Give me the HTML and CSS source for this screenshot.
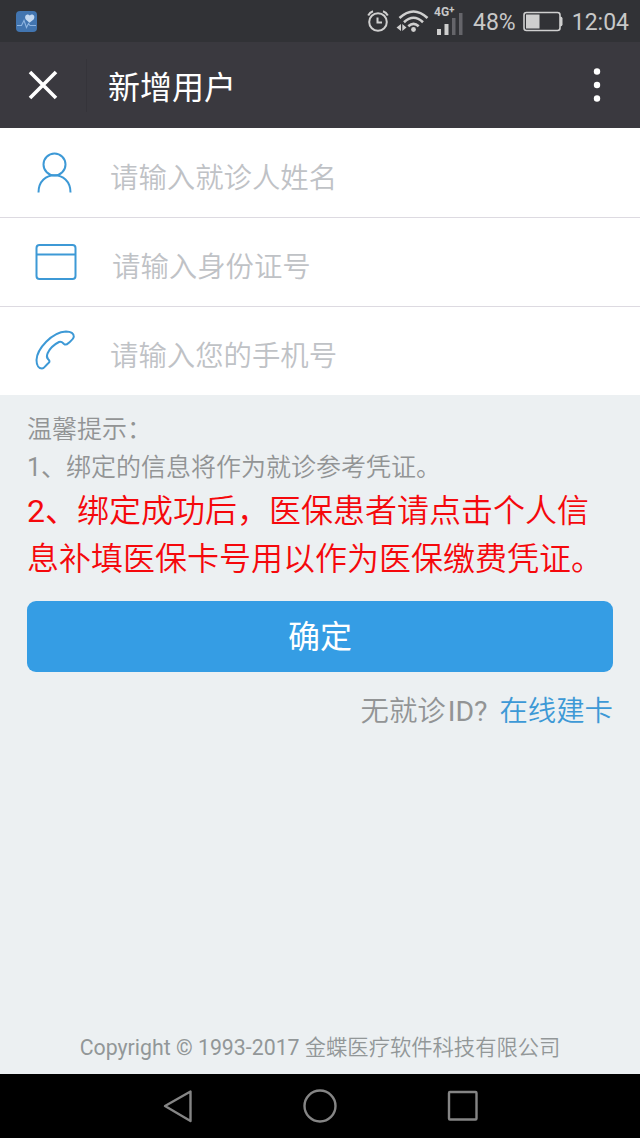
FILE: index.html
```
<!DOCTYPE html>
<html lang="zh-CN">
<head>
<meta charset="UTF-8">
<meta name="viewport" content="width=device-width, initial-scale=1.0">
<title>新增用户</title>
<link rel="stylesheet" href="styles.css">
</head>
<body>

<!-- Status bar -->
<div class="status-bar">
  <svg class="app-icon" width="21" height="21" viewBox="0 0 21 21">
    <rect width="21" height="21" rx="4" fill="#4275b0"/>
    <path d="M13.5 11.8L9.8 8.4C7.6 5 11.2 2 13.8 4.4C16.4 2 20 5 17.6 8.4Z" fill="#c3d8f0"/>
    <path d="M1 14.5H5.5L8 9.5L10.5 16.5L12.5 12.5L14 14.5H20" fill="none" stroke="#8db4e0" stroke-width="1.1"/>
  </svg>
  <div class="status-right">
    <svg width="22" height="24" viewBox="0 0 22 24" fill="none" stroke="#cfcfcf" stroke-width="2">
      <circle cx="11" cy="13" r="8.8"/>
      <path d="M10.5 8.5V13.5H15"/>
      <path d="M1.2 6.5Q2.8 3.2 6 2.2M20.8 6.5Q19.2 3.2 16 2.2"/>
    </svg>
    <svg class="wifi" width="33" height="24" viewBox="0 0 33 24" fill="none" stroke="#cfcfcf" stroke-width="2.6">
      <path d="M3.5 9Q17.5 -4 31.5 9"/>
      <path d="M8 13.2Q17.5 4.3 27 13.2"/>
      <path d="M12.3 17.2Q17.5 12.5 22.7 17.2"/>
      <circle cx="17.5" cy="20.5" r="2.4" fill="#cfcfcf" stroke="none"/>
      <path d="M0.5 18.5L5 15V22ZM10.5 18.5L6.3 15V22Z" fill="#cfcfcf" stroke="none"/>
    </svg>
    <div class="signal">
      <span class="network">4G<sup>+</sup></span>
      <svg width="27" height="22" viewBox="0 0 27 22">
        <path d="M1 16h4v6h-4zM8.5 11h4v11h-4z" fill="#cfcfcf"/>
        <path d="M16 5h3.5v17h-3.5zM23 0h3.5v22h-3.5z" fill="#65656a"/>
      </svg>
    </div>
    <span class="percent">48%</span>
    <svg class="battery" width="40" height="21" viewBox="0 0 40 21">
      <rect x="1" y="1.5" width="36" height="18" rx="2.5" fill="none" stroke="#cfcfcf" stroke-width="1.6"/>
      <rect x="3" y="3.5" width="13.5" height="14" fill="#cfcfcf"/>
      <path d="M37 5.5q2.5 0 2.5 2v6q0 2-2.5 2z" fill="#cfcfcf"/>
    </svg>
    <span class="time">12:04</span>
  </div>
</div>

<!-- Title bar -->
<header>
  <svg class="close" width="30" height="30" viewBox="0 0 30 30" stroke="#fff" stroke-width="3.6">
    <path d="M2 2L28 28M28 2L2 28"/>
  </svg>
  <h1>新增用户</h1>
  <svg class="more" width="8" height="34" viewBox="0 0 8 34" fill="#fff">
    <circle cx="4" cy="3.5" r="3.2"/>
    <circle cx="4" cy="17" r="3.2"/>
    <circle cx="4" cy="30.5" r="3.2"/>
  </svg>
</header>

<main>
  <form>
    <div class="fields">
      <label class="field">
        <svg width="42" height="42" viewBox="0 0 42 42">
          <circle cx="19.5" cy="12.5" r="11"/>
          <path d="M3.5 40.5C3.5 17.5 35.5 17.5 35.5 40.5"/>
        </svg>
        <input type="text" placeholder="请输入就诊人姓名">
      </label>
      <label class="field id-field">
        <svg width="42" height="42" viewBox="0 0 42 42">
          <rect x="1.5" y="4" width="39" height="34" rx="3"/>
          <path d="M1.5 13.5H40.5"/>
        </svg>
        <input type="text" placeholder="请输入身份证号">
      </label>
      <label class="field">
        <svg width="42" height="42" viewBox="0 0 42 42">
          <path d="M31 1.5C17 2 2 19 1.5 30C1.5 35.5 4 38.5 7 38.5C9.5 38.5 10.5 35.5 13 33.5C15.5 31.5 14.5 30.5 13 29C11.5 27.5 11.5 26 12.5 23.5C14.5 19 19 14.5 24 12C26.5 11 27.5 12.5 29 14C30.5 15.2 32 14.5 33.5 13C35.5 11 38.5 9.5 38.8 6.8C39 3.5 36 1.5 31 1.5Z"/>
        </svg>
        <input type="tel" placeholder="请输入您的手机号">
      </label>
    </div>

    <div class="tips">
      <p>温馨提示：</p>
      <p>1、绑定的信息将作为就诊参考凭证。</p>
      <p class="important">2、绑定成功后，医保患者请点击个人信息补填医保卡号用以作为医保缴费凭证。</p>
    </div>

    <button type="submit">确定</button>
  </form>

  <p class="no-card">无就诊<span class="latin">ID?</span> <a href="#">在线建卡</a></p>
</main>

<footer>
  <p><span class="latin">Copyright © 1993-2017</span> 金蝶医疗软件科技有限公司</p>
</footer>

<!-- System navigation -->
<nav>
  <svg width="32" height="34" viewBox="0 0 32 34"><path d="M4 17L29.5 2.5V32Z"/></svg>
  <svg width="34" height="34" viewBox="0 0 34 34"><circle cx="17" cy="17" r="15.5"/></svg>
  <svg width="32" height="34" viewBox="0 0 32 34"><rect x="2" y="3" width="27.5" height="27.5" rx="1"/></svg>
</nav>

</body>
</html>
```
FILE: styles.css
```
/* General styles */
* {
  box-sizing: border-box;
}

body {
  font-family: Roboto, 'Noto Sans CJK SC', sans-serif;
  font-weight: 350;
  margin: 0;
  height: 1138px;
  display: flex;
  flex-direction: column;
  background-color: #ecf0f2;
}

h1,
p {
  margin: 0;
  font-weight: inherit;
}

svg {
  display: block;
  flex-shrink: 0;
}

.latin {
  font-weight: 400;
}

/* Status bar */
.status-bar {
  height: 42px;
  padding: 0 11px 0 16px;
  display: flex;
  align-items: center;
  justify-content: space-between;
  background-color: #313236;
  color: #c8c8c8;
  font-size: 23px;
  font-weight: 400;
}

.status-right {
  display: flex;
  align-items: center;
}

.wifi {
  margin-left: 7px;
}

.signal {
  display: grid;
  width: 29px;
  margin-left: 5px;
  height: 28px;
  margin-bottom: 4px;
}

.signal > * {
  grid-area: 1 / 1;
}

.signal svg {
  align-self: end;
  margin-left: 2px;
  margin-bottom: -2px;
}

.network {
  font-size: 12px;
  font-weight: 700;
  line-height: 15px;
  z-index: 1;
}

.network sup {
  font-size: 10px;
  line-height: 0;
  vertical-align: 3px;
}

.percent {
  margin-left: 10px;
  padding-top: 2px;
}

.battery {
  margin-left: 7px;
}

.time {
  margin-left: 9px;
  padding-top: 2px;
}

/* Title bar */
header {
  height: 86px;
  padding: 0 39px 0 28px;
  display: flex;
  align-items: center;
  background-color: #3a393f;
  color: #fff;
}

h1 {
  margin-left: 28px;
  padding: 5px 0 0 21px;
  border-left: 1px solid #35343a;
  font-size: 32px;
  font-weight: 400;
  line-height: 48px;
}

.more {
  margin-left: auto;
}

/* Form */
.fields {
  background-color: #fff;
}

.field {
  height: 89px;
  padding-left: 35px;
  display: flex;
  align-items: center;
  border-bottom: 1px solid #dddae1;
}

.field:first-child {
  height: 90px;
}

.field:last-child {
  height: 88px;
  border-bottom: none;
}

.field svg {
  fill: none;
  stroke: #3d99d6;
  stroke-width: 2;
}

.field input {
  flex: 1;
  min-width: 0;
  height: 60px;
  margin-left: 33px;
  padding: 11px 0 0;
  border: none;
  outline: none;
  background: none;
  font: inherit;
  font-size: 28.4px;
}

.id-field input {
  margin-left: 35px;
}

.field input::placeholder {
  color: #bfc2c6;
  opacity: 1;
}

.tips {
  padding: 16px 27px 0;
  color: #929495;
  font-size: 25px;
  line-height: 37.5px;
}

.tips p + p::first-letter {
  font-weight: 400;
}

.tips .important {
  padding-top: 1px;
  color: #f5080c;
  font-size: 32px;
  line-height: 48px;
}

button {
  display: block;
  width: 586px;
  height: 71px;
  margin: 18px 0 0 27px;
  padding: 0 0 6px;
  border: none;
  border-radius: 9px;
  background-color: #359de4;
  color: #fff;
  font: inherit;
  font-size: 32px;
  font-weight: 400;
}

.no-card {
  margin-top: 19px;
  padding-right: 27px;
  text-align: right;
  color: #929495;
  font-size: 28.4px;
  line-height: 42px;
}

.no-card .latin {
  margin-left: 2px;
}

.no-card a {
  margin-left: 5px;
  color: #3d99d6;
  text-decoration: none;
}

/* Footer */
footer {
  margin-top: auto;
  padding-bottom: 10px;
  text-align: center;
  color: #929798;
  font-size: 21.3px;
  line-height: 32px;
}

nav {
  height: 64px;
  padding: 0 161px;
  display: flex;
  align-items: center;
  justify-content: space-between;
  background-color: #000;
}

nav svg {
  fill: none;
  stroke: #858585;
  stroke-width: 2.4;
  stroke-linejoin: round;
}
```
